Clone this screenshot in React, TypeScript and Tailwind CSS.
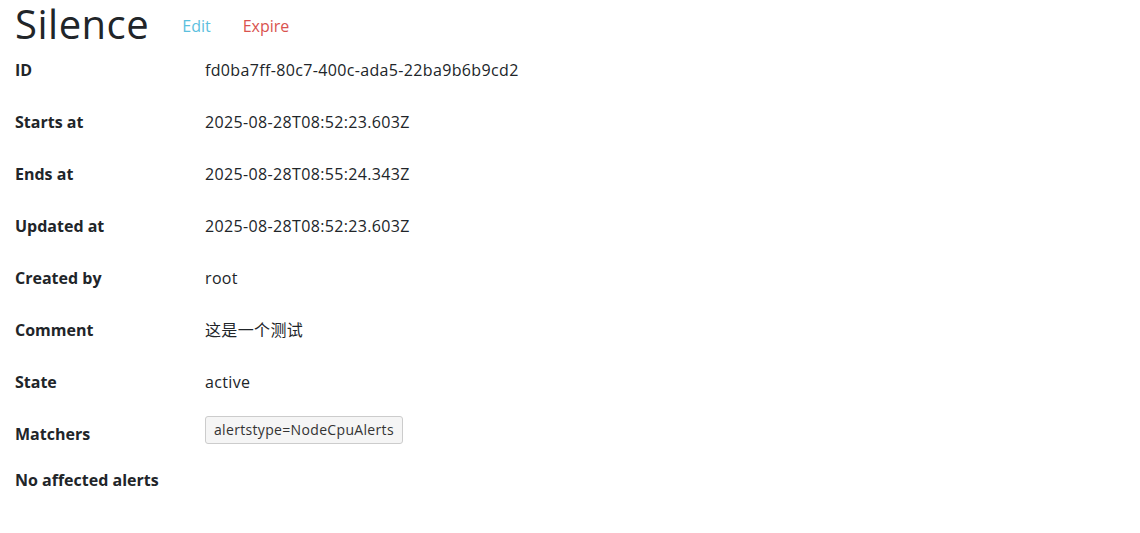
import React from 'react';

const rows: { label: string; value: string }[] = [
  { label: 'ID', value: 'fd0ba7ff-80c7-400c-ada5-22ba9b6b9cd2' },
  { label: 'Starts at', value: '2025-08-28T08:52:23.603Z' },
  { label: 'Ends at', value: '2025-08-28T08:55:24.343Z' },
  { label: 'Updated at', value: '2025-08-28T08:52:23.603Z' },
  { label: 'Created by', value: 'root' },
  { label: 'Comment', value: '这是一个测试' },
  { label: 'State', value: 'active' },
];

export default function App() {
  return (
    <div
      className="min-h-[533px] w-[1140px] bg-white px-[15px] text-[16px] leading-6 text-[#212529]"
      style={{ fontFamily: '"Open Sans", "Noto Sans CJK SC", sans-serif' }}
    >
      <div className="flex h-[48px] items-start">
        <h1 className="text-[40px] leading-[48px] font-normal tracking-[0.5px]">Silence</h1>
        <button className="ml-[21px] px-[12px] pt-[14px] text-[#5bc0de]">Edit</button>
        <button className="ml-[8px] px-[12px] pt-[14px] text-[#d9534f]">Expire</button>
      </div>

      <div className="-mt-[4px]">
        {rows.map((r) => (
          <div key={r.label} className="flex h-[52px] items-center">
            <div className="w-[190px] font-bold">{r.label}</div>
            <div className="tracking-[0.35px]">{r.value}</div>
          </div>
        ))}

        <div className="flex h-[52px] items-start">
          <div className="w-[190px] pt-[14px] font-bold">Matchers</div>
          <div className="mt-[8px] rounded-[3px] border border-[#cccccc] bg-[#f5f5f5] px-[8px] py-[1px] text-[14px] tracking-[0.33px] text-[#333]">
            alertstype=NodeCpuAlerts
          </div>
        </div>

        <div className="mt-[8px] font-bold">No affected alerts</div>
      </div>
    </div>
  );
}
